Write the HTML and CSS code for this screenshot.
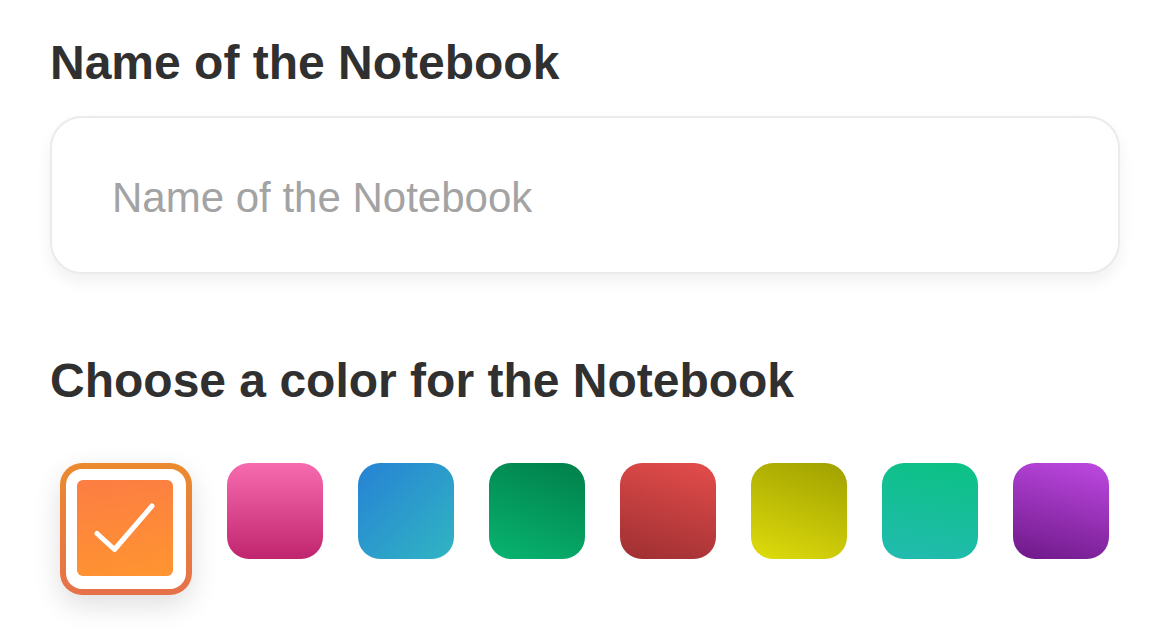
FILE: index.html
```html
<!DOCTYPE html>
<html>
<head>
<meta charset="utf-8">
<link rel="stylesheet" href="styles.css">
</head>
<body>
<main class="form">
  <h1 class="label">Name of the Notebook</h1>
  <input class="name-input" type="text" placeholder="Name of the Notebook">
  <h2 class="label label-color">Choose a color for the Notebook</h2>
  <div class="swatches">
    <div class="swatch-ring">
      <div class="swatch swatch-orange selected">
        <svg class="check" viewBox="0 0 94 94" width="94" height="94">
          <path d="M19 52.5 L36.5 68.5 L74 25" fill="none" stroke="#fff" stroke-width="5" stroke-linecap="round" stroke-linejoin="round"/>
        </svg>
      </div>
    </div>
    <div class="swatch swatch-pink"></div>
    <div class="swatch swatch-blue"></div>
    <div class="swatch swatch-green"></div>
    <div class="swatch swatch-red"></div>
    <div class="swatch swatch-yellow"></div>
    <div class="swatch swatch-teal"></div>
    <div class="swatch swatch-purple"></div>
  </div>
</main>
</body>
</html>
```

FILE: styles.css
```css
html, body {
  margin: 0;
  padding: 0;
  background: #ffffff;
}

body {
  font-family: "Liberation Sans", Arial, Helvetica, sans-serif;
  color: #303030;
}

.form {
  display: flex;
  flex-direction: column;
  align-items: flex-start;
  padding: 35px 50px 40px 50px;
}

.label {
  margin: 0;
  font-size: 48px;
  line-height: 56px;
  font-weight: 700;
  color: #303030;
}

.name-input {
  box-sizing: border-box;
  margin: 25px 0 0 0;
  width: 1070px;
  height: 158px;
  padding: 6px 60px 0 60px;
  border: 2px solid #ebebeb;
  border-radius: 32px;
  background: #ffffff;
  box-shadow: 0 8px 16px rgba(0, 0, 0, 0.06);
  font-family: "Liberation Sans", Arial, Helvetica, sans-serif;
  font-size: 42px;
  color: #303030;
  outline: none;
}

.name-input::placeholder {
  color: #a3a3a3;
}

.label-color {
  margin-top: 79px;
}

.swatches {
  display: flex;
  align-items: flex-start;
  gap: 35px;
  margin-top: 54px;
  margin-left: 10px;
}

.swatch {
  width: 96px;
  height: 96px;
  border-radius: 22px;
  flex: none;
}

.swatch-ring {
  box-sizing: border-box;
  width: 132px;
  height: 132px;
  padding: 12px;
  border: 6px solid transparent;
  border-radius: 22px;
  background:
    linear-gradient(#ffffff, #ffffff) padding-box,
    linear-gradient(180deg, #eb8a2e 0%, #e6714a 100%) border-box;
  box-shadow: 0 10px 28px rgba(0, 0, 0, 0.13);
  flex: none;
}

.swatch.selected {
  width: 96px;
  height: 96px;
  margin: -1px;
  border-radius: 6px;
  display: flex;
  align-items: center;
  justify-content: center;
}

.check {
  display: block;
}

.swatch-orange { background: linear-gradient(170deg, #fc7d43 0%, #ff9530 100%); }
.swatch-pink   { background: linear-gradient(180deg, #f76bae 0%, #c0256e 100%); }
.swatch-blue   { background: linear-gradient(135deg, #2782d5 0%, #30b5c2 100%); }
.swatch-green  { background: linear-gradient(200deg, #007f49 0%, #08b471 100%); }
.swatch-red    { background: linear-gradient(195deg, #e44d4b 0%, #9e2f32 100%); }
.swatch-yellow { background: linear-gradient(200deg, #9fa000 0%, #dfdc0c 100%); }
.swatch-teal   { background: linear-gradient(190deg, #0bc183 0%, #22bbb0 100%); }
.swatch-purple { background: linear-gradient(195deg, #be49e2 0%, #6e1888 100%); }
```
